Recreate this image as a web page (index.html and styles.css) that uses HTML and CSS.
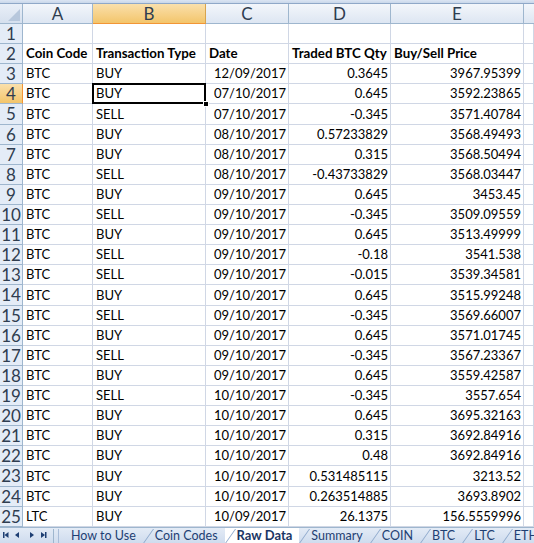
FILE: index.html
```html
<!DOCTYPE html>
<html>
<head>
<meta charset="utf-8">
<link rel="stylesheet" href="styles.css">
</head>
<body>
<div class="app">
  <div class="topstrip"></div>
  <div class="sheet">
    <div class="row head">
      <div class="corner"><span class="tri"></span></div>
      <div class="ch">A</div><div class="ch sel">B</div><div class="ch">C</div><div class="ch">D</div><div class="ch">E</div><div class="ch last"></div>
    </div>
    <div class="row"><div class="rh">1</div><div class="c"></div><div class="c"></div><div class="c"></div><div class="c"></div><div class="c"></div><div class="c"></div></div>
    <div class="row"><div class="rh">2</div><div class="c b">Coin Code</div><div class="c b">Transaction Type</div><div class="c b">Date</div><div class="c b">Traded BTC Qty</div><div class="c b">Buy/Sell Price</div><div class="c"></div></div>
    <div class="row"><div class="rh">3</div><div class="c">BTC</div><div class="c">BUY</div><div class="c n">12/09/2017</div><div class="c n">0.3645</div><div class="c n">3967.95399</div><div class="c"></div></div>
    <div class="row"><div class="rh sel">4</div><div class="c">BTC</div><div class="c active">BUY<span class="handle"></span></div><div class="c n">07/10/2017</div><div class="c n">0.645</div><div class="c n">3592.23865</div><div class="c"></div></div>
    <div class="row"><div class="rh">5</div><div class="c">BTC</div><div class="c">SELL</div><div class="c n">07/10/2017</div><div class="c n">-0.345</div><div class="c n">3571.40784</div><div class="c"></div></div>
    <div class="row"><div class="rh">6</div><div class="c">BTC</div><div class="c">BUY</div><div class="c n">08/10/2017</div><div class="c n">0.57233829</div><div class="c n">3568.49493</div><div class="c"></div></div>
    <div class="row"><div class="rh">7</div><div class="c">BTC</div><div class="c">BUY</div><div class="c n">08/10/2017</div><div class="c n">0.315</div><div class="c n">3568.50494</div><div class="c"></div></div>
    <div class="row"><div class="rh">8</div><div class="c">BTC</div><div class="c">SELL</div><div class="c n">08/10/2017</div><div class="c n">-0.43733829</div><div class="c n">3568.03447</div><div class="c"></div></div>
    <div class="row"><div class="rh">9</div><div class="c">BTC</div><div class="c">BUY</div><div class="c n">09/10/2017</div><div class="c n">0.645</div><div class="c n">3453.45</div><div class="c"></div></div>
    <div class="row"><div class="rh">10</div><div class="c">BTC</div><div class="c">SELL</div><div class="c n">09/10/2017</div><div class="c n">-0.345</div><div class="c n">3509.09559</div><div class="c"></div></div>
    <div class="row"><div class="rh">11</div><div class="c">BTC</div><div class="c">BUY</div><div class="c n">09/10/2017</div><div class="c n">0.645</div><div class="c n">3513.49999</div><div class="c"></div></div>
    <div class="row"><div class="rh">12</div><div class="c">BTC</div><div class="c">SELL</div><div class="c n">09/10/2017</div><div class="c n">-0.18</div><div class="c n">3541.538</div><div class="c"></div></div>
    <div class="row"><div class="rh">13</div><div class="c">BTC</div><div class="c">SELL</div><div class="c n">09/10/2017</div><div class="c n">-0.015</div><div class="c n">3539.34581</div><div class="c"></div></div>
    <div class="row"><div class="rh">14</div><div class="c">BTC</div><div class="c">BUY</div><div class="c n">09/10/2017</div><div class="c n">0.645</div><div class="c n">3515.99248</div><div class="c"></div></div>
    <div class="row"><div class="rh">15</div><div class="c">BTC</div><div class="c">SELL</div><div class="c n">09/10/2017</div><div class="c n">-0.345</div><div class="c n">3569.66007</div><div class="c"></div></div>
    <div class="row"><div class="rh">16</div><div class="c">BTC</div><div class="c">BUY</div><div class="c n">09/10/2017</div><div class="c n">0.645</div><div class="c n">3571.01745</div><div class="c"></div></div>
    <div class="row"><div class="rh">17</div><div class="c">BTC</div><div class="c">SELL</div><div class="c n">09/10/2017</div><div class="c n">-0.345</div><div class="c n">3567.23367</div><div class="c"></div></div>
    <div class="row"><div class="rh">18</div><div class="c">BTC</div><div class="c">BUY</div><div class="c n">09/10/2017</div><div class="c n">0.645</div><div class="c n">3559.42587</div><div class="c"></div></div>
    <div class="row"><div class="rh">19</div><div class="c">BTC</div><div class="c">SELL</div><div class="c n">10/10/2017</div><div class="c n">-0.345</div><div class="c n">3557.654</div><div class="c"></div></div>
    <div class="row"><div class="rh">20</div><div class="c">BTC</div><div class="c">BUY</div><div class="c n">10/10/2017</div><div class="c n">0.645</div><div class="c n">3695.32163</div><div class="c"></div></div>
    <div class="row"><div class="rh">21</div><div class="c">BTC</div><div class="c">BUY</div><div class="c n">10/10/2017</div><div class="c n">0.315</div><div class="c n">3692.84916</div><div class="c"></div></div>
    <div class="row"><div class="rh">22</div><div class="c">BTC</div><div class="c">BUY</div><div class="c n">10/10/2017</div><div class="c n">0.48</div><div class="c n">3692.84916</div><div class="c"></div></div>
    <div class="row"><div class="rh">23</div><div class="c">BTC</div><div class="c">BUY</div><div class="c n">10/10/2017</div><div class="c n">0.531485115</div><div class="c n">3213.52</div><div class="c"></div></div>
    <div class="row"><div class="rh">24</div><div class="c">BTC</div><div class="c">BUY</div><div class="c n">10/10/2017</div><div class="c n">0.263514885</div><div class="c n">3693.8902</div><div class="c"></div></div>
    <div class="row"><div class="rh">25</div><div class="c">LTC</div><div class="c">BUY</div><div class="c n">10/09/2017</div><div class="c n">26.1375</div><div class="c n">156.5559996</div><div class="c"></div></div>
  </div>
  <div class="tabbar">
    <div class="nav">
      <svg width="54" height="16" viewBox="0 0 54 16">
        <g fill="#1e3f73">
          <rect x="3" y="5" width="1.5" height="6"/>
          <path d="M4.5 8 L8.5 5 L8.5 11 Z"/>
          <path d="M15 8 L19 5 L19 11 Z"/>
          <path d="M34 8 L30 5 L30 11 Z"/>
          <path d="M45 8 L41 5 L41 11 Z"/>
          <rect x="45" y="5" width="1.5" height="6"/>
        </g>
        <rect x="53" y="2" width="1" height="14" fill="#9eb6ce"/>
      </svg>
    </div>
    <div class="tabs">
      <div class="tab first">How to Use</div>
      <div class="tab">Coin Codes</div>
      <div class="tab on">Raw Data</div>
      <div class="tab">Summary</div>
      <div class="tab">COIN</div>
      <div class="tab">BTC</div>
      <div class="tab">LTC</div>
      <div class="tab">ETH</div>
    </div>
  </div>
</div>
</body>
</html>
```

FILE: styles.css
```css
* { box-sizing: border-box; }
html, body { margin: 0; padding: 0; background: #fff; }
body { width: 534px; height: 543px; overflow: hidden; font-family: Lato, "Open Sans", sans-serif; }
.app { width: 534px; height: 543px; display: flex; flex-direction: column; overflow: hidden; }

.topstrip { height: 4px; background: linear-gradient(#dbe5f3, #c9d7ea); border-bottom: 1px solid #8fa8c8; flex: none; }

.sheet { flex: none; }
.row {
  display: grid;
  grid-template-columns: 23px 70px 113px 83px 102px 133px 10px;
  height: 20.12px;
}
.row.head { height: 20px; }

.corner {
  position: relative;
  background: linear-gradient(#e9eff8, #d6e0ee);
  border-right: 1px solid #9eb6ce;
  border-bottom: 1px solid #9eb6ce;
}
.tri {
  position: absolute; right: 2px; bottom: 2px;
  width: 0; height: 0;
  border-left: 12px solid transparent;
  border-bottom: 12px solid #b7c7dc;
}
.ch {
  background: linear-gradient(#f3f6fb, #dde6f2);
  border-right: 1px solid #9eb6ce;
  border-bottom: 1px solid #9eb6ce;
  color: #2f3d50;
  font-size: 17px;
  display: flex; align-items: center; justify-content: center;
  line-height: 1;
}
.ch.sel { background: linear-gradient(#fae0ac, #f3c56b); border-bottom-color: #f29536; border-right-color: #d7a44e; }
.ch.last { border-right: none; }

.rh {
  background: #e4ecf7;
  border-right: 1px solid #9eb6ce;
  border-bottom: 1px solid #9eb6ce;
  color: #2f3d50;
  font-size: 17px;
  display: flex; align-items: center; justify-content: center;
  line-height: 1;
}
.rh.sel { background: linear-gradient(#fae0ac, #f3c56b); border-right-color: #f29536; }

.c {
  border-right: 1px solid #d0d7e5;
  border-bottom: 1px solid #d0d7e5;
  font-size: 13px;
  color: #000;
  padding: 0 2px 1px 3px;
  display: flex; align-items: flex-end;
  white-space: nowrap;
  overflow: visible;
  line-height: 17px;
}
.c.n { justify-content: flex-end; }
.c.b { font-weight: bold; font-size: 13.3px; }
.c.active { position: relative; }
.c.active::after {
  content: "";
  position: absolute; left: -1px; top: -1px; right: -1px; bottom: -1px;
  border: 2px solid #000;
}
.handle {
  position: absolute; right: -4px; bottom: -4px;
  width: 6px; height: 6px;
  background: #000; border: 1px solid #fff;
  z-index: 2;
}

.tabbar {
  flex: 1;
  display: flex;
  background: linear-gradient(#e3ebf6, #cfdcee);
  border-top: 1px solid #9eb6ce;
  min-height: 16px;
}
.nav { width: 56px; flex: none; display: flex; align-items: center; }
.tabs { display: flex; align-items: stretch; margin-left: 2px; }
.tab {
  position: relative;
  font-size: 12.5px;
  color: #1e3f73;
  padding: 0 7px 0 12px;
  line-height: 15px;
  white-space: nowrap;
}
.tab::before {
  content: "";
  position: absolute; left: 0; top: 1px; bottom: 0;
  width: 1px;
  background: #8ea9cc;
  transform: skewX(-35deg);
  transform-origin: bottom left;
}
.tab.first { padding-left: 13px; }
.tab.first::before { transform: none; background: #a9bdd8; }
.tab.on {
  background: #fff;
  font-weight: bold;
  font-size: 13px;
  color: #1b3665;
  z-index: 2;
}
```
